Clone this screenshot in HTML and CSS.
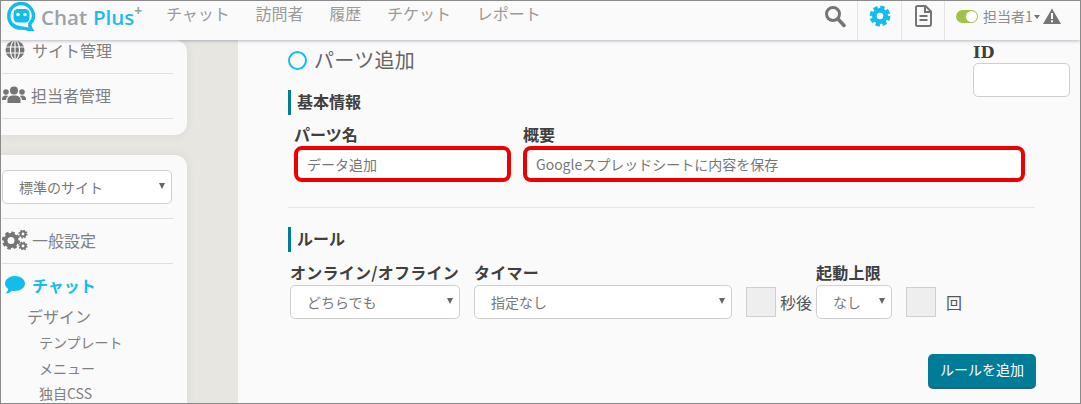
FILE: index.html
```html
<!DOCTYPE html>
<html lang="ja">
<head>
<meta charset="utf-8">
<title>Chat Plus</title>
<link rel="stylesheet" href="styles.css">
</head>
<body>
<div class="frame">
  <header class="topbar">
    <div class="logo">
      <svg class="logo-mark" width="28" height="29" viewBox="0 0 28 29">
        <path d="M14 1.500C7 1.500 1.800 7 1.800 14S7 26 14 26c3 0 6 .5 11 2.500-2-2.500-2.500-4.500-2-7 2.500-2.300 3.500-4.500 3.500-7.500C26.500 7 21 1.500 14 1.500z" fill="none" stroke="#12bdec" stroke-width="3.500"/>
        <rect x="6.500" y="7" width="16" height="13.500" rx="4.500" fill="#12bdec"/>
        <circle cx="11" cy="12.500" r="1.800" fill="#fff"/>
        <circle cx="18" cy="12.500" r="1.800" fill="#fff"/>
      </svg>
      <span class="logo-chat">Chat</span>
      <span class="logo-plus">Plus</span>
      <span class="logo-sup">+</span>
    </div>
    <nav class="nav">
      <a class="nav-item">チャット</a>
      <a class="nav-item">訪問者</a>
      <a class="nav-item">履歴</a>
      <a class="nav-item">チケット</a>
      <a class="nav-item">レポート</a>
    </nav>
    <div class="tools">
      <div class="tool tool-search">
        <svg width="22" height="24" viewBox="0 0 22 24"><circle cx="9" cy="10" r="6.500" fill="none" stroke="#757575" stroke-width="3"/><path d="M14 15l6 6.500" stroke="#757575" stroke-width="3.500" stroke-linecap="round"/></svg>
      </div>
      <div class="tool tool-gear">
        <svg width="22" height="22" viewBox="0 0 22 22"><circle cx="11" cy="11" r="8" fill="#12bdec"/><circle cx="11" cy="11" r="8.700" fill="none" stroke="#12bdec" stroke-width="3.500" stroke-dasharray="4.300 2.530"/><circle cx="11" cy="11" r="3.300" fill="#fafafa"/></svg>
      </div>
      <div class="tool tool-doc">
        <svg width="17" height="22" viewBox="0 0 17 22"><path d="M2.500 1h8l5.500 5.500V19a2 2 0 0 1-2 2H2.500a1.500 1.500 0 0 1-1.500-1.500v-17A1.500 1.500 0 0 1 2.500 1z" fill="none" stroke="#757575" stroke-width="2"/><path d="M10 1v6h6M4.500 11h8M4.500 15h8" fill="none" stroke="#757575" stroke-width="2"/></svg>
      </div>
      <div class="user">
        <span class="toggle"><span class="toggle-knob"></span></span>
        <span class="user-name">担当者1</span>
        <span class="caret"></span>
        <svg width="18" height="16" viewBox="0 0 18 16"><path d="M9 .5L18 16H0z" fill="#757575"/><path d="M9 5v6M9 12.300v2" stroke="#fafafa" stroke-width="2"/></svg>
      </div>
    </div>
  </header>

  <div class="workspace">
    <aside class="sidebar">
      <section class="card card-top">
        <div class="side-row side-row-first">
          <svg class="side-icon" width="20" height="20" viewBox="0 0 20 20"><circle cx="10" cy="10" r="9.500" fill="#757575"/><path d="M1 7h18M1 13h18M10 1v18" stroke="#fafafa" stroke-width="1.200"/><ellipse cx="10" cy="10" rx="4.500" ry="9.500" fill="none" stroke="#fafafa" stroke-width="1.200"/></svg>
          <span>サイト管理</span>
        </div>
        <div class="side-row side-row-people">
          <svg class="side-icon side-icon-wide" width="24" height="18" viewBox="0 0 24 18"><g fill="#757575"><circle cx="12" cy="4.500" r="4"/><circle cx="4" cy="6" r="2.800"/><circle cx="20" cy="6" r="2.800"/><path d="M5.500 17v-3.500C5.500 11 8 9.500 12 9.500s6.500 1.500 6.500 4V17z"/><path d="M0 13c0-2 1.500-3.500 4-3.500 1 0 1.800.2 2.300.6C5 11 4.200 12 4 14H0zM24 13c0-2-1.500-3.500-4-3.500-1 0-1.800.2-2.300.6C19 11 19.800 12 20 14h4z"/></g></svg>
          <span>担当者管理</span>
        </div>
      </section>

      <section class="card card-bottom">
        <div class="select-wrap site-select">
          <select class="select"><option>標準のサイト</option></select>
        </div>
        <div class="side-row side-row-general">
          <svg class="side-icon side-icon-wide" width="26" height="20" viewBox="0 0 26 20"><circle cx="9" cy="10.500" r="5.500" fill="none" stroke="#757575" stroke-width="4"/><circle cx="9" cy="10.500" r="7.800" fill="none" stroke="#757575" stroke-width="2.600" stroke-dasharray="3.500 2.620"/><circle cx="21" cy="4" r="2.400" fill="none" stroke="#757575" stroke-width="2"/><circle cx="21" cy="4" r="3.800" fill="none" stroke="#757575" stroke-width="1.500" stroke-dasharray="1.500 1.480"/><circle cx="21" cy="16" r="2.400" fill="none" stroke="#757575" stroke-width="2"/><circle cx="21" cy="16" r="3.800" fill="none" stroke="#757575" stroke-width="1.500" stroke-dasharray="1.500 1.480"/></svg>
          <span>一般設定</span>
        </div>
        <div class="chat-head">
          <svg class="chat-icon" width="20" height="18" viewBox="0 0 20 18"><path d="M10 0c5.500 0 10 3.300 10 7.500S15.500 15 10 15c-1 0-2-.1-3-.3C5.500 16.200 3.500 17.300 .5 17.500 2 16 3 14.500 3.200 13 1.200 11.600 0 9.700 0 7.500 0 3.300 4.500 0 10 0z" fill="#12bdec"/></svg>
          <span>チャット</span>
        </div>
        <div class="sub-head">デザイン</div>
        <ul class="sub-list">
          <li>テンプレート</li>
          <li>メニュー</li>
          <li>独自CSS</li>
        </ul>
      </section>
    </aside>

    <div class="gutter"></div>

    <main class="main">
      <div class="main-top">
        <div class="main-top-left">
          <h1 class="title"><span class="ring"></span>パーツ追加</h1>
          <h2 class="section-head section-head-basic">基本情報</h2>
        </div>
        <div class="id-field">
          <label class="label label-id">ID</label>
          <input class="input input-id" type="text">
        </div>
      </div>

      <div class="basic-fields">
        <div class="field">
          <label class="label">パーツ名</label>
          <input class="input input-red input-name" type="text" value="データ追加">
        </div>
        <div class="field">
          <label class="label">概要</label>
          <input class="input input-red input-summary" type="text" value="Googleスプレッドシートに内容を保存">
        </div>
      </div>

      <hr class="divider">

      <h2 class="section-head section-head-rule">ルール</h2>

      <div class="rule-fields">
        <div class="field">
          <label class="label">オンライン/オフライン</label>
          <div class="select-wrap online-select">
            <select class="select"><option>どちらでも</option></select>
          </div>
        </div>
        <div class="field">
          <label class="label">タイマー</label>
          <div class="select-wrap timer-select">
            <select class="select"><option>指定なし</option></select>
          </div>
        </div>
        <div class="small-box"></div>
        <span class="unit unit-sec">秒後</span>
        <div class="field">
          <label class="label">起動上限</label>
          <div class="select-wrap limit-select">
            <select class="select"><option>なし</option></select>
          </div>
        </div>
        <div class="small-box small-box-limit"></div>
        <span class="unit unit-times">回</span>
      </div>

      <div class="actions">
        <button class="btn" type="button">ルールを追加</button>
      </div>
    </main>
  </div>
</div>
</body>
</html>
```

FILE: styles.css
```css
* { box-sizing: border-box; }

html, body {
  margin: 0;
  padding: 0;
}

body {
  width: 1081px;
  height: 404px;
  overflow: hidden;
  font-family: "Noto Sans CJK JP", "Noto Sans", sans-serif;
  color: #757575;
}

.frame {
  width: 1081px;
  height: 404px;
  border: 1px solid #8a8a8a;
  display: flex;
  flex-direction: column;
  overflow: hidden;
  background: #e8e6e1;
}

/* top bar */
.topbar {
  position: relative;
  z-index: 2;
  flex: none;
  height: 39px;
  display: flex;
  align-items: stretch;
  background: #fafafa;
  box-shadow: 0 1px 3px rgba(90, 100, 120, .45);
}

.logo {
  width: 165px;
  display: flex;
  align-items: flex-start;
  padding-left: 6px;
  padding-top: 1px;
  flex: none;
}

.logo-mark { flex: none; margin-right: 6px; }

.logo-chat, .logo-plus {
  font-family: "Open Sans", sans-serif;
  font-weight: 600;
  font-size: 20.500px;
  line-height: 28px;
  margin-top: 1px;
}

.logo-chat { color: #98a3a9; margin-right: 6px; }
.logo-plus { color: #19bdec; }

.logo-sup {
  font-family: "Open Sans", sans-serif;
  font-weight: 700;
  font-size: 14px;
  line-height: 14px;
  color: #8aa7b0;
  margin-top: 2px;
}

.nav {
  display: flex;
  gap: 25.700px;
  align-items: flex-start;
}

.nav-item {
  font-size: 16px;
  line-height: 25px;
  color: #9a9a9a;
}

.tools {
  margin-left: auto;
  display: flex;
  align-items: stretch;
}

.tool {
  display: flex;
  justify-content: center;
  padding-top: 3px;
  border-right: 1px solid #e4e4e4;
}

.tool-search { width: 34px; justify-content: flex-start; }
.tool-gear { width: 44px; padding-top: 4px; }
.tool-doc { width: 43px; padding-top: 4px; }

.user {
  width: 135px;
  display: flex;
  align-items: flex-start;
  padding-left: 11px;
}

.toggle {
  flex: none;
  width: 22px;
  height: 13px;
  margin-top: 9px;
  border-radius: 7px;
  background: #a0c14a;
  display: flex;
  justify-content: flex-end;
  align-items: center;
  padding-right: 1px;
}

.toggle-knob {
  width: 11px;
  height: 11px;
  border-radius: 50%;
  background: #fff;
}

.user-name {
  margin-left: 5px;
  font-size: 14px;
  line-height: 30px;
  color: #8c8c8c;
}

.caret {
  margin: 14px 3px 0 1px;
  width: 0;
  height: 0;
  border: 3.500px solid transparent;
  border-top: 4px solid #757575;
  border-bottom: 0;
}

.user svg { margin-top: 7px; flex: none; }

/* body */
.workspace {
  flex: 1;
  min-height: 0;
  display: flex;
}

.sidebar {
  flex: none;
  width: 186px;
}

.card {
  background: #fafafa;
  padding-left: 1px;
  padding-right: 14px;
  border-radius: 0 12px 12px 0;
  box-shadow: 0 0 8px rgba(120, 115, 100, .12);
}

.card-top {
  height: 95px;
  margin-bottom: 20px;
}

.card-bottom {
  padding-top: 15px;
  height: 260px;
  overflow: hidden;
  border-radius: 0 12px 0 0;
}

.side-row {
  height: 45px;
  display: flex;
  align-items: center;
  border-bottom: 1px solid #dedede;
  font-size: 16px;
  color: #808080;
}

.side-row-first { height: 34px; padding-bottom: 13px; }
.side-row-people { padding-bottom: 2px; }

.side-row-general {
  height: 46px;
  border-top: 1px solid #dedede;
  padding-bottom: 3px;
}

.side-icon { flex: none; margin-left: 3px; margin-right: 7px; }
.side-icon-wide { margin-left: 0; margin-right: 5px; }
.side-row-general .side-icon-wide { margin-left: 0; margin-right: 4px; }

.chat-head {
  height: 44px;
  display: flex;
  align-items: center;
  padding-bottom: 2px;
  font-size: 16px;
  font-weight: 700;
  color: #12bdec;
}

.chat-icon { margin-left: 3px; margin-right: 7px; }

.sub-head {
  font-size: 16px;
  line-height: 24px;
  margin-top: -4px;
  padding-left: 25px;
  color: #808080;
}

.sub-list {
  list-style: none;
  margin: 2px 0 0;
  padding: 0 0 0 37px;
  font-size: 14px;
  line-height: 25.500px;
  color: #808080;
}

/* selects */
.select-wrap {
  position: relative;
  height: 34px;
}

.select-wrap::after {
  content: "";
  position: absolute;
  top: 13px;
  right: 7px;
  border: 3px solid transparent;
  border-top: 6px solid #666;
  border-bottom: 0;
}

.select {
  appearance: none;
  -webkit-appearance: none;
  width: 100%;
  height: 100%;
  border: 1px solid #cfcfcf;
  border-radius: 5px;
  background: #fff;
  padding: 0 16px;
  font-family: inherit;
  font-size: 14px;
  color: #777;
}

.site-select {
  width: 170px;
  margin-left: 0;
  margin-bottom: 14px;
}

/* gutter */
.gutter {
  flex: none;
  width: 51px;
}

/* main */
.main {
  flex: 1;
  min-width: 0;
  background: #fafafa;
  padding: 0 10px 0 50px;
}

.main-top {
  display: flex;
  justify-content: space-between;
  height: 76px;
}

.title {
  margin: 6px 0 0;
  display: flex;
  align-items: center;
  font-weight: 400;
  font-size: 20px;
  letter-spacing: .3px;
  line-height: 28px;
  color: #666;
}

.ring {
  width: 19px;
  height: 19px;
  margin-right: 7px;
  border: 2px solid #12bdec;
  border-radius: 50%;
}

.section-head {
  margin: 0;
  height: 25px;
  border-left: 3px solid #007c99;
  padding-left: 6px;
  font-size: 16px;
  line-height: 23px;
  font-weight: 700;
  color: #3f3f3f;
}

.section-head-basic { margin-top: 16px; }
.section-head-rule { margin-top: 19px; }

.id-field {
  width: 97px;
  display: flex;
  flex-direction: column;
}

.label {
  display: block;
  font-size: 16px;
  font-weight: 700;
  line-height: 20px;
  color: #3f3f3f;
  white-space: nowrap;
}

.label-id {
  font-family: "DejaVu Serif", serif;
  font-size: 16px;
  line-height: 21px;
  margin-top: 2px;
}

.input {
  display: block;
  background: #fff;
  font-family: inherit;
  font-size: 14px;
  color: #777;
  padding: 0;
  outline: none;
}

.input-id {
  width: 97px;
  height: 34px;
  border: 1px solid #cfcfcf;
  border-radius: 5px;
}

.basic-fields {
  display: flex;
  gap: 12px;
  padding-left: 6px;
  margin-top: 8px;
}

.input-red {
  height: 36px;
  border: 4px solid #ee0000;
  border-radius: 8px;
  padding-left: 9px;
}

.input-name { width: 217px; }
.input-summary { width: 502px; }

.basic-fields .label { height: 22px; line-height: 20px; }

.divider {
  border: 0;
  border-top: 1px solid #e6e6e6;
  margin: 25px 0 0;
  width: 747px;
}

.rule-fields {
  display: flex;
  align-items: flex-end;
  padding-left: 2px;
  margin-top: 9px;
  height: 58px;
}

.rule-fields .label { line-height: 21px; margin-bottom: 2px; letter-spacing: .25px; }

.online-select { width: 170px; }
.timer-select { width: 258px; }
.limit-select { width: 76px; }

.rule-fields .field:nth-child(2) { margin-left: 14px; }

.small-box {
  flex: none;
  width: 30px;
  height: 30px;
  margin: 0 0 2px 14px;
  background: #eee;
  border: 1px solid #cfcfcf;
}

.unit {
  font-size: 16px;
  line-height: 30px;
  margin-bottom: 2px;
  color: #555;
}

.unit-sec { margin-left: 4px; margin-right: 4px; }
.unit-times { margin-left: 10px; }

.actions {
  display: flex;
  justify-content: flex-end;
  width: 748px;
  margin-top: 35px;
}

.btn {
  width: 108px;
  height: 35px;
  border: 0;
  border-bottom: 2px solid #2a6373;
  border-radius: 5px;
  background: #007c99;
  color: #fff;
  font-family: inherit;
  font-size: 14px;
  padding: 0 0 4px;
}
```
